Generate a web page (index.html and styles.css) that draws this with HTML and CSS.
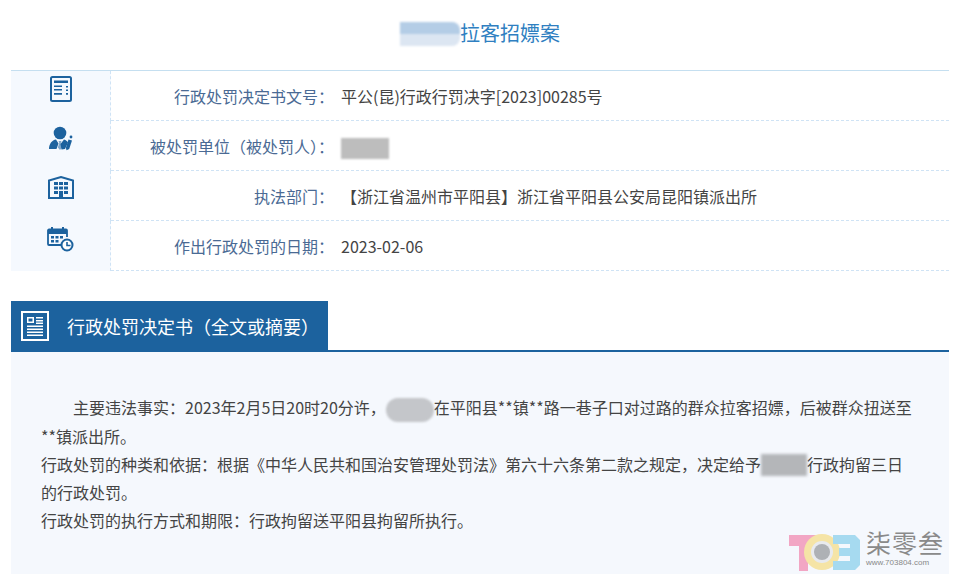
FILE: index.html
```html
<!DOCTYPE html>
<html lang="zh-CN">
<head>
<meta charset="utf-8">
<title>行政处罚</title>
<link rel="stylesheet" href="styles.css">
</head>
<body>
<main class="page">
  <h1 class="title"><span class="blur blur-title"></span>拉客招嫖案</h1>
  <section class="info">
    <div class="row">
      <div class="icon-cell">
        <svg width="22" height="26" viewBox="0 0 22 26"><rect x="1" y="1" width="20" height="24" rx="1.5" fill="none" stroke="#1c629e" stroke-width="2"/><path d="M4 4.500h14v2.500H4zM4 9.500h8v1.500H4zM4 13h8v1.500H4zM4 17h8v1.700H4zM16 10h2v1.500h-2zM16 13.500h2V15h-2zM16 17h2v1.700h-2z" fill="#1c629e"/></svg>
      </div>
      <div class="label">行政处罚决定书文号：</div>
      <div class="value">平公(昆)行政行罚决字[2023]00285号</div>
    </div>
    <div class="row">
      <div class="icon-cell">
        <svg width="26" height="25" viewBox="0 0 26 25"><circle cx="12" cy="7" r="6.300" fill="#1c629e"/><path d="M1 23c0-5 3-9 7-9.500l2.500 4-2 5.500zM16 13.500c2 .5 3 1.500 4 3l-3 6.500-3.500.5-1-5.500z" fill="#1c629e"/><path d="M10.500 15h3l-.8 2 1.500 4.500-2.200 2.500-2.200-2.500 1.500-4.500z" fill="#1c629e" opacity=".55"/><path d="M20.500 13.500l3.500 1-2.800 8.500-2.700 1.200-.6-2.500z" fill="#1c629e"/><circle cx="23" cy="11" r="1.400" fill="#1c629e"/></svg>
      </div>
      <div class="label">被处罚单位（被处罚人）：</div>
      <div class="value"><span class="blur blur-name"></span></div>
    </div>
    <div class="row">
      <div class="icon-cell">
        <svg width="26" height="23" viewBox="0 0 26 23"><path d="M1 22V4.500L13 1l12 3.500V22z" fill="none" stroke="#1c629e" stroke-width="2"/><path d="M6 6h4v3H6zM11 6h4v3h-4zM16 6h4v3h-4zM6 10.500h4v3H6zM11 10.500h4v3h-4zM16 10.500h4v3h-4zM6 15h4v3H6zM16 15h4v3h-4zM11 15h4v7h-4z" fill="#1c629e"/></svg>
      </div>
      <div class="label">执法部门：</div>
      <div class="value">【浙江省温州市平阳县】浙江省平阳县公安局昆阳镇派出所</div>
    </div>
    <div class="row">
      <div class="icon-cell">
        <svg width="27" height="26" viewBox="0 0 27 26"><path d="M14 19H2a1 1 0 0 1-1-1V4.500a1 1 0 0 1 1-1h17a1 1 0 0 1 1 1V11" fill="none" stroke="#1c629e" stroke-width="1.800"/><path d="M1 4h19v4H1zM4 1h2v5H4zM15 1h2v5h-2zM4 10h3v2.500H4zM8.500 10h3v2.500h-3zM13 10h3v2.500h-3zM4 14h3v2.500H4zM8.500 14h3v2.500h-3z" fill="#1c629e"/><circle cx="20" cy="19" r="5.500" fill="#fff" stroke="#1c629e" stroke-width="2"/><path d="M20 16v3.500h3.500" fill="none" stroke="#1c629e" stroke-width="1.600"/></svg>
      </div>
      <div class="label">作出行政处罚的日期：</div>
      <div class="value">2023-02-06</div>
    </div>
  </section>
  <header class="section-head">
    <div class="tab">
      <svg class="tab-icon" width="28" height="30" viewBox="0 0 28 30"><rect x="1" y="1" width="26" height="28" fill="none" stroke="#fff" stroke-width="2"/><path d="M6 6h7v6H6zM7.500 7.500v3h4v-3z" fill="#fff" fill-rule="evenodd"/><path d="M15 6h7v1.500h-7zM15 9h7v1.500h-7zM15 11.500h7V13h-7zM6 14.500h16V16H6zM6 17.500h16V19H6zM6 20.500h16V22H6zM6 23.500h16V25H6z" fill="#fff"/></svg>
      <h2 class="tab-text">行政处罚决定书（全文或摘要）</h2>
    </div>
  </header>
  <section class="body-text">
    <p class="indent">主要违法事实：2023年2月5日20时20分许，<span class="blur blur-a"></span>在平阳县**镇**路一巷子口对过路的群众拉客招嫖，后被群众扭送至**镇派出所。</p>
    <p>行政处罚的种类和依据：根据《中华人民共和国治安管理处罚法》第六十六条第二款之规定，决定给予<span class="blur blur-b"></span>行政拘留三日的行政处罚。</p>
    <p>行政处罚的执行方式和期限：行政拘留送平阳县拘留所执行。</p>
  </section>
  <aside class="mark">
    <svg width="76" height="48" viewBox="0 0 76 48">
      <path d="M2 8h28v11H21v25h-9V19H2z" fill="#f2a6c4"/>
      <circle cx="35" cy="25" r="18" fill="#f5e4a6"/>
      <circle cx="35" cy="25" r="11" fill="#e8eaee"/>
      <circle cx="35" cy="25" r="8" fill="#aeb1b5"/>
      <path d="M46 8h22l5 5v25l-5 5H46V34h17v-5H52v-8h11v-4H46z" fill="#a6daf0"/>
    </svg>
    <div class="mark-text">
      <div class="mark-name">柒零叁</div>
      <div class="mark-url">www.703804.com</div>
    </div>
  </aside>
</main>
</body>
</html>
```
FILE: styles.css
```css
* { box-sizing: border-box; }
html, body { margin: 0; padding: 0; background: #fff; }
body {
  font-family: "Noto Sans CJK SC", "Liberation Sans", sans-serif;
  font-size: 16px;
  color: #444;
  overflow: hidden;
}
.page {
  position: relative;
  width: 958px;
  height: 574px;
  padding: 0 9px 0 11px;
  overflow: hidden;
}
.title {
  margin: 0;
  height: 70px;
  padding-top: 19px;
  font-size: 20px;
  line-height: 28px;
  font-weight: 400;
  color: #2f7fc1;
  text-align: center;
}
.blur { display: inline-block; vertical-align: middle; }
.blur-title {
  width: 60px;
  height: 24px;
  margin-top: -3px;
  background: linear-gradient(#b4cde6 0 50%, #dce6f2 50% 100%);
  filter: blur(1px);
  border-radius: 0 8px 8px 0;
}
.info { border-top: 1px solid #c5dff0; }
.row {
  display: grid;
  grid-template-columns: 100px 223px 1fr;
  height: 50px;
  border-bottom: 1px dashed #cfe3f5;
}
.row:first-child { height: 50px; }
.icon-cell {
  background: #f5f9fe;
  border-right: 1px dashed #cfe3f5;
  display: flex;
  justify-content: center;
  align-items: flex-start;
  padding-top: 5px;
}
.label {
  color: #4a6a94;
  text-align: right;
  line-height: 50px;
  white-space: nowrap;
}
.value {
  padding-left: 7px;
  line-height: 50px;
  white-space: nowrap;
}
.blur-name {
  width: 48px;
  height: 21px;
  background: #bdbdbd;
  filter: blur(1px);
}
.section-head {
  margin-top: 30px;
  height: 51px;
  border-bottom: 2px solid #1c629e;
}
.tab {
  display: flex;
  align-items: center;
  width: 317px;
  height: 49px;
  background: #1c629e;
  padding-left: 10px;
  color: #fff;
}
.tab-icon { flex: none; }
.tab-text {
  margin: 0 0 0 18px;
  font-size: 18px;
  font-weight: 400;
  white-space: nowrap;
}
.body-text {
  height: 222px;
  background: #f5f8fd;
  padding: 41px 30px 0;
  line-height: 28px;
}
.body-text p { margin: 0; }
.indent { text-indent: 2em; }
.blur-a {
  width: 48px;
  height: 24px;
  border-radius: 12px;
  background: #c4c6ca;
  filter: blur(1px);
}
.blur-b {
  width: 46px;
  height: 22px;
  margin-top: -2px;
  background: #b4b6b9;
  filter: blur(1.5px);
}
.mark {
  position: absolute;
  left: 787px;
  top: 527px;
  display: flex;
  align-items: flex-start;
  gap: 3px;
}
.mark-text { padding-top: 0; }
.mark-name {
  font-size: 25px;
  line-height: 30px;
  letter-spacing: 1px;
  color: #8a8a8a;
}
.mark-url {
  font-family: "Liberation Sans", sans-serif;
  font-size: 8px;
  line-height: 12px;
  color: #888;
  white-space: nowrap;
}
```
